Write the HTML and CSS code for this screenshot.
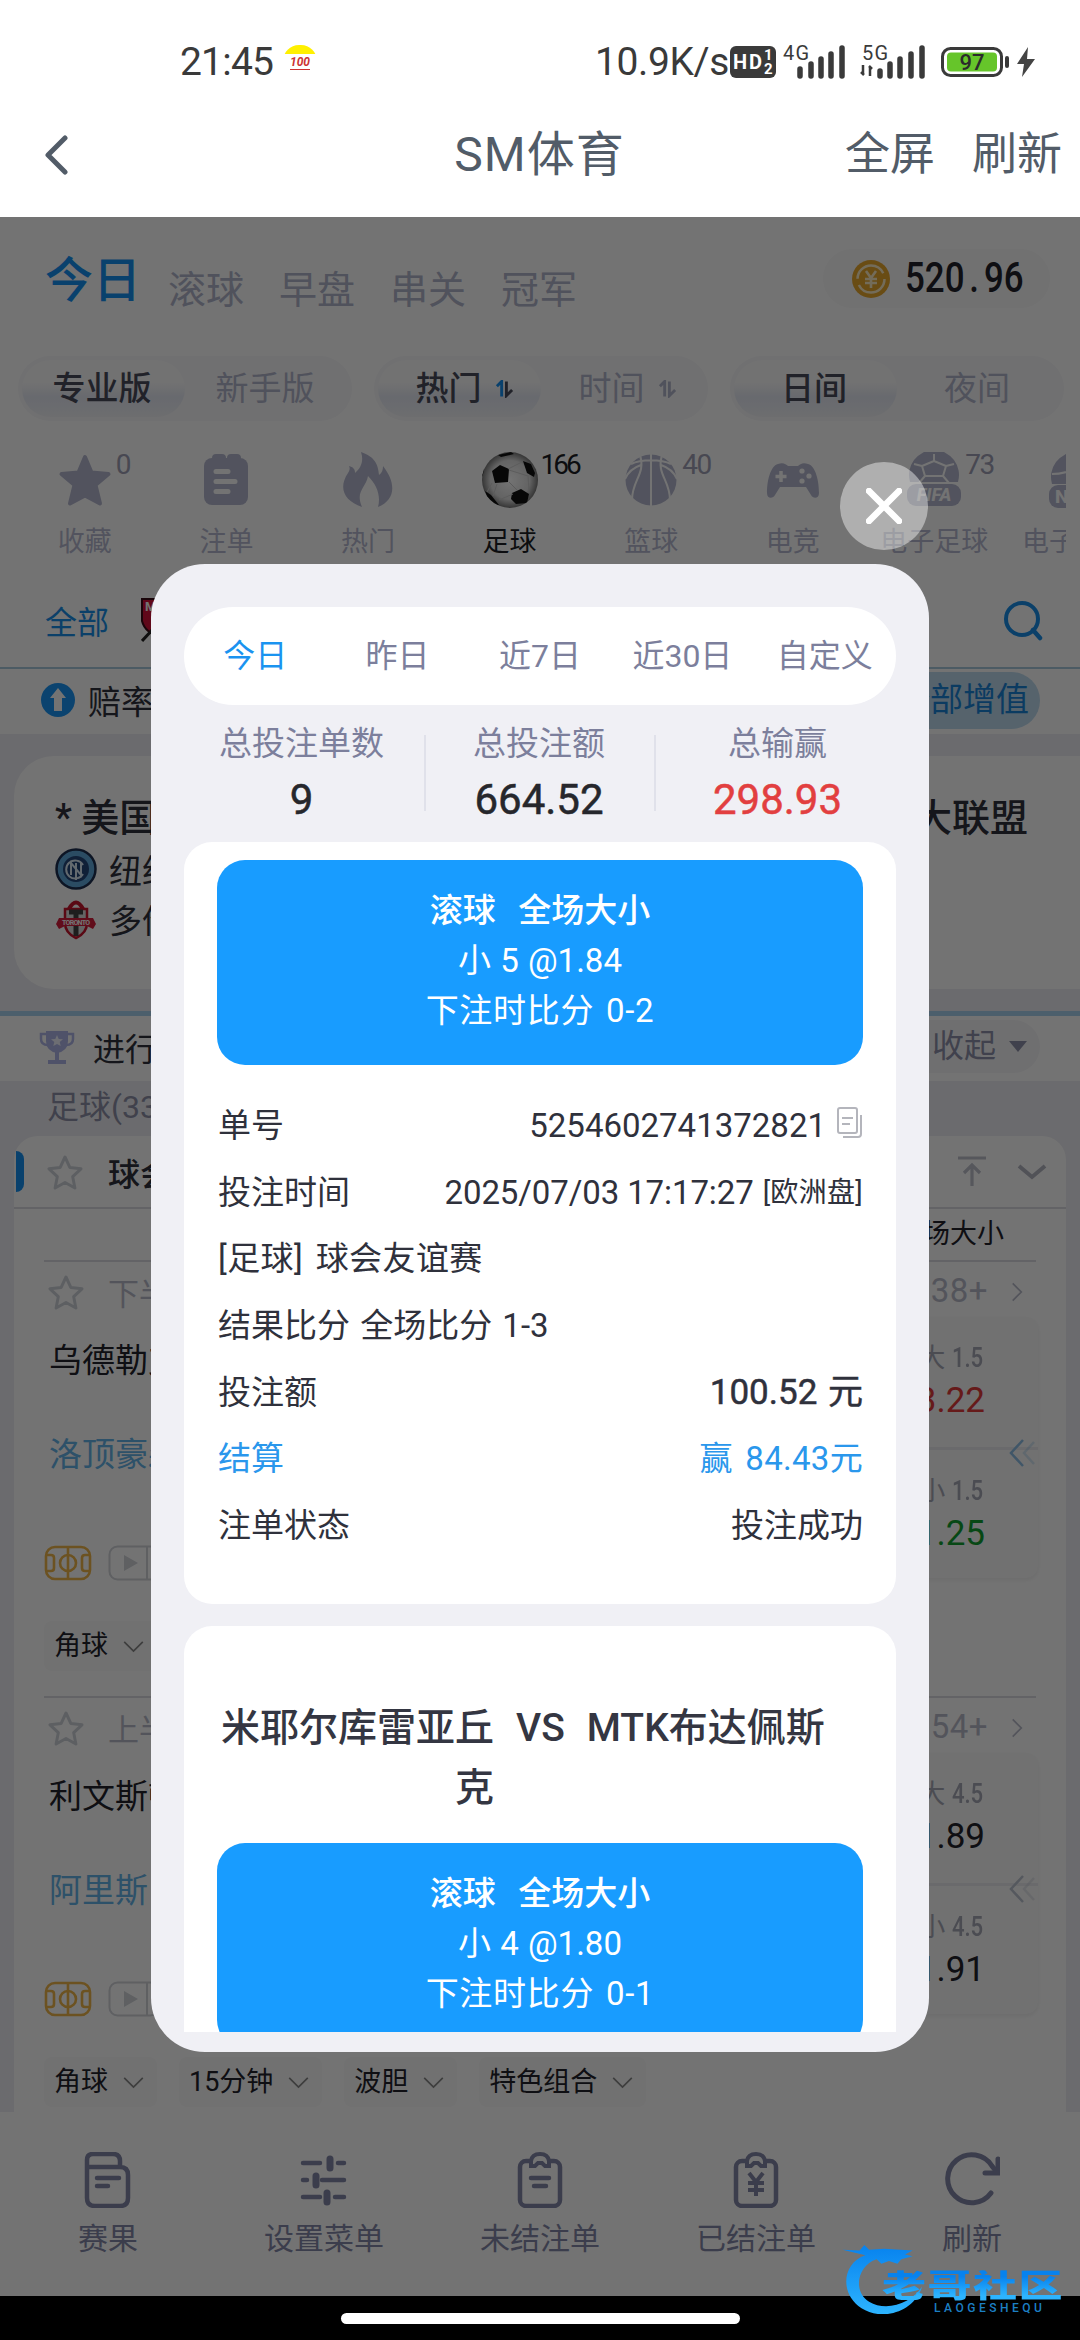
FILE: index.html
```html
<!DOCTYPE html>
<html lang="zh-CN">
<head>
<meta charset="utf-8">
<title>SM体育</title>
<link rel="stylesheet" href="styles.css">
</head>
<body>
<svg class="defs" width="0" height="0" aria-hidden="true">
  <symbol id="star" viewBox="0 0 40 36"><path d="M20 3l4.800 10.400 11.200 1.400-8.300 7.900 2.200 11.300L20 28.500 10.100 34l2.200-11.300L4 14.800l11.200-1.400z" fill="none" stroke="currentColor" stroke-width="3" stroke-linejoin="round"/></symbol>
  <symbol id="down" viewBox="0 0 22 14"><path d="M1 2l10 10L21 2" fill="none" stroke="currentColor" stroke-width="1.800"/></symbol>
  <symbol id="right" viewBox="0 0 14 22"><path d="M2 1l10 10L2 21" fill="none" stroke="currentColor" stroke-width="2"/></symbol>
  <symbol id="dbl" viewBox="0 0 28 30"><path d="M15 2L3 15l12 13" fill="none" stroke="currentColor" stroke-width="2.500"/><path d="M26 4L16 15l10 11" fill="none" stroke="currentColor" stroke-width="2.500" opacity=".35"/></symbol>
  <symbol id="pitch" viewBox="0 0 48 36"><g fill="none" stroke="currentColor" stroke-width="2.600"><rect x="2" y="2" width="44" height="32" rx="9"/><path d="M24 2v32M2 10h5q3 0 3 3v10q0 3-3 3H2M46 10h-5q-3 0-3 3v10q0 3 3 3h5"/><circle cx="24" cy="18" r="8"/></g></symbol>
  <symbol id="play" viewBox="0 0 52 36"><rect x="1.500" y="1.500" width="49" height="33" rx="8" fill="none" stroke="currentColor" stroke-width="2"/><path d="M16 10l14 8-14 8z" fill="currentColor"/><path d="M39 2v32" stroke="currentColor" stroke-width="2"/></symbol>
  <symbol id="sort" viewBox="0 0 20 18"><path d="M2 6l5-5v16" fill="none" stroke="var(--up)" stroke-width="3"/><path d="M12 1v15l6-6" fill="none" stroke="currentColor" stroke-width="3"/></symbol>
</svg>

<header class="status">
  <div class="status-left">
    <span class="clock">21:45</span>
    <span class="emoji"><b>100</b></span>
  </div>
  <div class="status-right">
    <span class="speed">10.9K/s</span>
    <svg class="hd" viewBox="0 0 46 32"><rect width="46" height="32" rx="6" fill="#3a3a3a"/><text x="3" y="23" font-size="20" font-weight="700" textLength="29" fill="#fff">HD</text><text x="34" y="14" font-size="15" font-weight="700" fill="#fff">1</text><text x="34" y="28" font-size="15" font-weight="700" fill="#fff">2</text></svg>
    <svg class="sig1" viewBox="0 0 66 34"><text x="0" y="15" font-size="20" textLength="26" fill="#3a3a3a">4G</text><path d="M17 31v-7M28 31v-12M38 31V14M48 31V9M59 31V3" stroke="#3a3a3a" stroke-width="5.500" stroke-linecap="round"/></svg>
    <svg class="sig2" viewBox="0 0 68 34"><text x="3" y="15" font-size="20" textLength="26" fill="#3a3a3a">5G</text><path d="M4 20v9M2 27l3 3M11 31v-9M13 24l-3-3" stroke="#3a3a3a" stroke-width="2.500"/><path d="M21 31v-5M31 31v-12M41 31V14M52 31V9M63 31V3" stroke="#3a3a3a" stroke-width="5.500" stroke-linecap="round"/></svg>
    <svg class="battery" viewBox="0 0 70 30"><rect x="1.500" y="1.500" width="59" height="27" rx="8" fill="#fff" stroke="#3a3a3a" stroke-width="3"/><rect x="6" y="5.500" width="50" height="19" rx="4" fill="#66c52a"/><path d="M66 11v8" stroke="#3a3a3a" stroke-width="4" stroke-linecap="round"/><text x="31" y="23" font-size="22" font-weight="500" text-anchor="middle" fill="#2b2b2b">97</text></svg>
    <svg class="bolt" viewBox="0 0 18 30"><path d="M11 0L0 17h7L5 30 18 12h-8z" fill="#444"/></svg>
  </div>
</header>
<div class="titlebar">
  <svg class="back" viewBox="0 0 24 40"><path d="M21 3L4 20l17 17" fill="none" stroke="#525c68" stroke-width="5" stroke-linecap="round" stroke-linejoin="round"/></svg>
  <h1>SM体育</h1>
  <nav><span>全屏</span><span>刷新</span></nav>
</div>

<main class="app">
  <section class="top">
    <div class="tabs"><b>今日</b><span>滚球</span><span>早盘</span><span>串关</span><span>冠军</span></div>
    <div class="balance">
      <svg viewBox="0 0 40 40"><circle cx="20" cy="20" r="19" fill="#e9a82e"/><circle cx="20" cy="20" r="13.500" fill="none" stroke="#fff0c8" stroke-width="2.500" stroke-dasharray="36 6.400"/><path d="M15 12l5 7 5-7M20 19v10M14 20h12M14 24h12" fill="none" stroke="#fff0c8" stroke-width="2.600"/></svg>
      <span class="money">520<i>.</i>96</span>
    </div>
  </section>
  <section class="segments">
    <div class="seg"><b>专业版</b><span>新手版</span></div>
    <div class="seg sorts"><b>热门<svg class="sort on"><use href="#sort"/></svg></b><span>时间<svg class="sort"><use href="#sort"/></svg></span></div>
    <div class="seg"><b>日间</b><span>夜间</span></div>
  </section>
  <section class="sports">
    <div class="sport"><div class="pic"><svg viewBox="0 0 56 56"><path d="M28 5l6.500 15.500 17 1.500-13 11 4.500 18.500-15-8-15 8L17.500 33l-13-11 17-1.500z" fill="currentColor" stroke="currentColor" stroke-width="4" stroke-linejoin="round"/></svg><sup>0</sup></div>收藏</div>
    <div class="sport"><div class="pic"><svg viewBox="0 0 56 56"><rect x="6" y="6" width="44" height="47" rx="8" fill="currentColor"/><path d="M18 6h6M33 6h6" stroke="currentColor" stroke-width="8" stroke-linecap="round"/><path d="M18 19.500h12M18 29.500h19M18 39.500h12" stroke="#fff" stroke-width="5" stroke-linecap="round"/></svg></div>注单</div>
    <div class="sport"><div class="pic"><svg viewBox="0 0 56 56"><path d="M21 0c14 5 17 12 18 23 3-2 4-5 4-9 14 18 12 34-5 41 3-11-1-22-10-31-2 12-13 15-6 31C4 49-2 36 8 21c2-3 2-5 1-7 4 1 6 3 6 7 6-5 9-12 6-21z" fill="currentColor"/></svg></div>热门</div>
    <div class="sport active"><div class="pic"><svg viewBox="0 0 56 56"><defs><radialGradient id="ball"><stop offset="0" stop-color="#fff"/><stop offset=".7" stop-color="#ddd"/><stop offset="1" stop-color="#777"/></radialGradient><clipPath id="bc"><circle cx="28" cy="28" r="28"/></clipPath></defs><circle cx="28" cy="28" r="28" fill="url(#ball)"/><g clip-path="url(#bc)" fill="#111"><path d="M10 19l8-6 9 4-1 13-13 1zM41 9l8 3 4 9-1 4-7-4zM30 41l9-4 8 5-2 9-11 1-5-5zM3 39l6 4 8 10H8zM16 3L29 0l3 2-13 3zM0 25l2-6v-5l-2 2z"/><path d="M27 30l8 8M26 17l14-7M27 18l19 6M46 23l1 18M10 31L5 40M15 32l-4 12M17 48l14-6" fill="none" stroke="#ccc"/></g></svg><sup>166</sup></div>足球</div>
    <div class="sport"><div class="pic"><svg viewBox="0 0 56 56"><circle cx="28" cy="28" r="25.500" fill="currentColor"/><path d="M28 2v52M17 3c6 19-8 25-8 45M39 3c-6 19 8 25 8 45M8 12c10-5 30-5 40 0M2 27c4-9 10-12 16-14M54 27c-4-9-10-12-16-14" fill="none" stroke="#fff" stroke-width="2"/></svg><sup>40</sup></div>篮球</div>
    <div class="sport"><div class="pic"><svg viewBox="0 0 56 56"><path d="M13 12c5-2 8 0 10 2h10c2-2 5-4 10-2 8 2 11 18 11 29 0 6-6 6-8 2l-5-8H15l-5 8c-2 4-8 4-8-2 0-11 3-27 11-29z" fill="currentColor"/><path d="M16 19v11M10.500 24.500h11" stroke="#fff" stroke-width="3.500"/><g fill="#fff"><circle cx="37" cy="19" r="2.600"/><circle cx="37" cy="29" r="2.600"/><circle cx="44" cy="24" r="2.600"/></g></svg></div>电竞</div>
    <div class="sport"><div class="pic"><svg viewBox="0 0 56 56"><path d="M4 30a25 25 0 1 1 48 0z" fill="currentColor"/><path d="M28 2v7M28 9l-12 5M28 9l12 5M16 14l-8-2M40 14l8-2M16 14l3 10h18l3-10M19 24l-6 7M37 24l6 7" fill="none" stroke="#fff" stroke-width="2"/><rect x="1" y="32" width="54" height="22" rx="9" fill="currentColor"/><text x="28" y="49" font-size="18" font-weight="800" font-style="italic" text-anchor="middle" fill="#fff">FIFA</text></svg><sup>73</sup></div>电子足球</div>
    <div class="sport"><div class="pic"><svg viewBox="0 0 56 56"><path d="M4 32a25 25 0 1 1 48 0z" fill="currentColor"/><path d="M4 22c10 0 18-2 30-8" fill="none" stroke="#fff" stroke-width="2"/><rect x="1" y="33" width="54" height="23" rx="9" fill="currentColor"/><text x="7" y="51" font-size="19" font-weight="800" fill="#fff">NBA</text></svg></div>电子篮球</div>
  </section>
  <section class="leagues">
    <span class="all">全部</span>
    <svg class="mls" viewBox="0 0 40 44"><path d="M1 1h38v22q-4 10-19 16Q4 35 1 23z" fill="#d4123a" stroke="#3a0c18" stroke-width="2"/><path d="M1 43l12-13" stroke="#222" stroke-width="3"/><text x="4" y="13" font-size="13" font-weight="700" fill="#fff">MLS</text></svg>
    <svg class="search" viewBox="0 0 40 42"><circle cx="19" cy="20" r="16" fill="none" stroke="#1a8fe8" stroke-width="4"/><path d="M30 31l7 8" stroke="#1a8fe8" stroke-width="4.500" stroke-linecap="round"/></svg>
  </section>
  <section class="boost">
    <svg viewBox="0 0 36 36"><circle cx="18" cy="18" r="17" fill="#1a96f5"/><path d="M18 6l8 10h-4v13h-8V16h-4z" fill="#fff"/></svg>
    <span>赔率</span><em>全部增值</em>
  </section>
  <section class="featured">
    <div class="f-card">
      <div class="f-head"><span>* 美国</span><span>大联盟</span></div>
      <div class="f-team"><svg viewBox="0 0 42 42"><circle cx="21" cy="21" r="19.500" fill="#5fa8dc" stroke="#1d2f50" stroke-width="2.500"/><circle cx="21" cy="21" r="13" fill="#24477a"/><path d="M16 27V15l10 12V15M28 17a9 9 0 1 0 0 9M21 15v17" fill="none" stroke="#dcecf7" stroke-width="2"/></svg>纽约</div>
      <div class="f-team"><svg viewBox="0 0 42 42"><path d="M10 11h22v14q0 10-11 15Q10 35 10 25z" fill="#ddd" stroke="#c8142d" stroke-width="2.500"/><path d="M14 11q7-13 14 0" fill="none" stroke="#c8142d" stroke-width="4"/><path d="M21 13v25M14 14h14" stroke="#444" stroke-width="5"/><path d="M4 20h34l3 6-3 5-6-3H10l-6 3-3-5z" fill="#d81e3c"/><text x="21" y="27" font-size="7" font-weight="700" textLength="28" text-anchor="middle" fill="#fff">TORONTO</text></svg>多伦多</div>
    </div>
  </section>
  <section class="live">
    <svg class="cup" viewBox="0 0 36 36"><path d="M7 2h22v10q0 10-11 12Q7 22 7 12z" fill="#b0b7e8"/><path d="M7 5H2v5q0 6 7 6M29 5h5v5q0 6-7 6" fill="none" stroke="#b0b7e8" stroke-width="2.500"/><path d="M18 23v8M9 33h18" stroke="#b0b7e8" stroke-width="4"/><path d="M18 6l1.700 4 4.300.300-3.300 2.700 1 4L18 15l-3.700 2 1-4-3.300-2.700 4.300-.300z" fill="#f2f4ff"/></svg>
    <span>进行中</span><em>收起<i></i></em>
  </section>
  <div class="count">足球(33)</div>
  <section class="list">
    <div class="l-head">
      <i class="tab"></i><svg class="ic-star"><use href="#star"/></svg><span>球会友谊赛</span>
      <svg class="totop" viewBox="0 0 30 32"><path d="M1 2h28M15 30V10M7 17l8-8 8 8" fill="none" stroke="#bfc1cc" stroke-width="3.200"/></svg>
      <svg class="fold" viewBox="0 0 30 18"><path d="M2 3l13 11L28 3" fill="none" stroke="#b4b6c2" stroke-width="4"/></svg>
    </div>
    <div class="l-cols">全场大小</div>
    <article class="match">
      <div class="m-top"><svg class="ic-star"><use href="#star"/></svg><span>下半场</span><em>38+</em><svg class="ic-right"><use href="#right"/></svg></div>
      <div class="m-body">
        <div class="teams"><b>乌德勒支</b><span>洛顶豪森</span><p><svg class="ic-pitch"><use href="#pitch"/></svg><svg class="ic-play"><use href="#play"/></svg></p></div>
        <div class="odds"><div><small>大 <i>1.5</i></small><strong class="red">3.22</strong></div><div><small>小 <i>1.5</i></small><strong class="green">1.25</strong></div><svg class="ic-dbl blue"><use href="#dbl"/></svg></div>
      </div>
      <div class="chips"><span>角球<svg><use href="#down"/></svg></span></div>
    </article>
    <article class="match">
      <div class="m-top"><svg class="ic-star"><use href="#star"/></svg><span>上半场</span><em>54+</em><svg class="ic-right"><use href="#right"/></svg></div>
      <div class="m-body">
        <div class="teams"><b>利文斯顿</b><span>阿里斯</span><p><svg class="ic-pitch"><use href="#pitch"/></svg><svg class="ic-play"><use href="#play"/></svg></p></div>
        <div class="odds"><div><small>大 <i>4.5</i></small><strong>1.89</strong></div><div><small>小 <i>4.5</i></small><strong>1.91</strong></div><svg class="ic-dbl"><use href="#dbl"/></svg></div>
      </div>
      <div class="chips"><span>角球<svg><use href="#down"/></svg></span><span>15分钟<svg><use href="#down"/></svg></span><span>波胆<svg><use href="#down"/></svg></span><span>特色组合<svg><use href="#down"/></svg></span></div>
    </article>
  </section>
  <nav class="bottom">
    <div><svg viewBox="0 0 56 56"><path d="M7 17V8q0-6 6-6h20q7 0 7 7v6M7 14v32q0 8 8 8h25q8 0 8-8V23q0-8-8-8H7" fill="none" stroke="currentColor" stroke-width="4.500"/><path d="M17 26h22M17 34h11" stroke="currentColor" stroke-width="4.500" stroke-linecap="round"/></svg>赛果</div>
    <div><svg viewBox="0 0 56 56"><path d="M7 11h17M42 11h6M7 28h4M26 28h22M7 45h17M39 45h9" stroke="currentColor" stroke-width="4.500" stroke-linecap="round"/><path d="M34 7v9M20 24v9M31 41v9" stroke="currentColor" stroke-width="7" stroke-linecap="round"/></svg>设置菜单</div>
    <div><svg viewBox="0 0 56 56"><rect x="8" y="9" width="40" height="45" rx="6" fill="none" stroke="currentColor" stroke-width="4.500"/><path d="M19 14V9q1-7 9-7t9 7v5h-4l-3-3h-4l-3 3z" fill="#fff" stroke="currentColor" stroke-width="4"/><path d="M19 26h18M22 34h12" stroke="currentColor" stroke-width="4.500" stroke-linecap="round"/></svg>未结注单</div>
    <div><svg viewBox="0 0 56 56"><rect x="8" y="9" width="40" height="45" rx="6" fill="none" stroke="currentColor" stroke-width="4.500"/><path d="M19 14V9q1-7 9-7t9 7v5h-4l-3-3h-4l-3 3z" fill="#fff" stroke="currentColor" stroke-width="4"/><path d="M21 21l7 9 7-9M28 30v14M20 31h16M20 38h16" fill="none" stroke="currentColor" stroke-width="4"/></svg>已结注单</div>
    <div><svg viewBox="0 0 56 56"><path d="M47 41A24 24 0 1 1 48 14l4 5" fill="none" stroke="currentColor" stroke-width="5" stroke-linecap="round"/><path d="M54 7v14H41" fill="none" stroke="currentColor" stroke-width="5" stroke-linecap="round"/></svg>刷新</div>
  </nav>
</main>
<footer class="gesture"><i></i></footer>

<div class="mask"></div>
<button class="close" aria-label="关闭"><svg viewBox="0 0 36 36"><path d="M3 3l30 30M33 3L3 33" stroke="#fff" stroke-width="6.500" stroke-linecap="round"/></svg></button>
<section class="modal">
  <div class="range"><b>今日</b><span>昨日</span><span>近7日</span><span>近30日</span><span>自定义</span></div>
  <div class="totals">
    <div>总投注单数<b>9</b></div>
    <div>总投注额<b>664.52</b></div>
    <div>总输赢<b class="lose">298.93</b></div>
  </div>
  <div class="bets">
    <article class="bet">
      <div class="pick"><b>滚球&nbsp; 全场大小</b><span>小 5 @1.84</span><span class="score">下注时比分 0-2</span></div>
      <dl>
        <div><dt>单号</dt><dd class="num">5254602741372821<svg viewBox="0 0 26 32"><g fill="none" stroke="#b4b5bc" stroke-width="2"><rect x="1" y="1" width="19" height="25" rx="2"/><path d="M24 8v19q0 3-3 3H6M5 11h11M5 17h8"/></g></svg></dd></div>
        <div><dt>投注时间</dt><dd class="time">2025/07/03 17:17:27 <small>[欧洲盘]</small></dd></div>
        <div><dt class="league">[足球] 球会友谊赛</dt></div>
        <div><dt>结果比分 全场比分 1-3</dt></div>
        <div><dt>投注额</dt><dd class="amount">100.52 元</dd></div>
        <div class="settle"><dt>结算</dt><dd>赢 84.43元</dd></div>
        <div><dt>注单状态</dt><dd>投注成功</dd></div>
      </dl>
    </article>
    <article class="bet second">
      <h2><span>米耶尔库雷亚丘</span><span>VS</span><span>MTK布达佩斯</span></h2>
      <h2 class="rest">克</h2>
      <div class="pick"><b>滚球&nbsp; 全场大小</b><span>小 4 @1.80</span><span class="score">下注时比分 0-1</span></div>
    </article>
  </div>
</section>
<div class="watermark">
  <svg viewBox="0 0 96 74"><defs><linearGradient id="wm" x1="0" y1="0" x2="0" y2="1"><stop offset="0" stop-color="#0782ee"/><stop offset="1" stop-color="#2db4ff"/></linearGradient></defs><path d="M36 16C16 22 10 50 28 61c18 11 45 2 56-16-8 27-42 37-64 23C-4 52 0 20 24 12L0 6l18 1 5-6 5 5 16-1 30 2-8 4 8 2-12 3-4 5-9-3-8 3z" fill="url(#wm)"/></svg>
  <div><b>老哥社区</b><span>LAOGESHEQU</span></div>
</div>
</body>
</html>
```
FILE: styles.css
```css
* { box-sizing: border-box; margin: 0; padding: 0; }
body { position: relative; width: 1080px; height: 2340px; overflow: hidden; background: #fff; font-family: Roboto, "Noto Sans CJK SC", sans-serif; font-size: 32px; color: #2f313c; }
svg { display: block; flex: none; }
i, em { font-style: normal; }
.defs { position: absolute; }
svg text { font-family: Roboto, sans-serif; }

/* system status bar */
.status { height: 124px; display: flex; justify-content: space-between; color: #3a3a3a; font-size: 38px; line-height: 124px; }
.status svg { overflow: visible; }
.status-left { display: flex; padding-left: 180px; gap: 10px; }
.clock { width: 93px; font-size: 39px; white-space: nowrap; letter-spacing: -.8px; }
.emoji { width: 34px; height: 42px; margin-top: 45px; border-radius: 16px 16px 0 0; background: linear-gradient(#fff000 0 9px, #fff 9px); line-height: 34px; text-align: center; color: #c33; font-size: 12px; font-style: italic; }
.emoji b { border-bottom: 1px solid #c33; }
.status-right { display: flex; align-items: center; padding-right: 45px; }
.speed { width: 135px; font-size: 39px; white-space: nowrap; letter-spacing: -.4px; }
.hd { width: 46px; height: 32px; }
.sig1 { width: 66px; height: 34px; margin-left: 7px; }
.sig2 { width: 68px; height: 34px; margin-left: 10px; }
.battery { width: 70px; height: 30px; margin-left: 14px; }
.bolt { width: 18px; height: 30px; margin-left: 6px; }

/* browser title bar */
.titlebar { height: 93px; padding: 0 18px 32px 44px; display: grid; grid-template-columns: 1fr auto 1fr; align-items: center; color: #525c68; }
.titlebar h1 { font-size: 48px; font-weight: 400; line-height: 60px; margin-left: -27px; letter-spacing: 1px; }
.titlebar nav { display: flex; justify-content: flex-end; gap: 37px; font-size: 45px; line-height: 60px; }
.back { width: 24px; height: 40px; }

/* page */
.app { height: 2079px; background: #fff; overflow: hidden; }
.top { height: 124px; display: flex; justify-content: space-between; padding: 32px 30px 0 45px; color: #b2b5cc; }
.tabs { display: flex; gap: 35px; font-size: 38px; line-height: 82px; }
.tabs b { font-size: 48px; font-weight: 500; line-height: 64px; color: #1690f2; margin-right: -8px; }
.balance { width: 227px; height: 59px; border-radius: 30px; background: #fafafa; display: flex; align-items: center; padding-left: 28px; gap: 14px; }
.balance svg { width: 40px; height: 40px; }
.money { font-size: 42px; font-weight: 500; color: #22232b; transform: scaleX(.83) translateY(-1px); transform-origin: left; white-space: nowrap; }
.money i { display: inline-block; width: .56em; text-align: center; }
.segments { display: flex; justify-content: space-between; padding: 15px 16px 0 18px; height: 96px; }
.seg { width: 334px; height: 65px; border-radius: 33px; background: #f8f8fa; display: flex; padding: 4px; font-size: 33px; line-height: 57px; color: #b2b5cc; }
.seg > * { flex: 1; display: flex; justify-content: center; align-items: center; gap: 13px; font-weight: 400; padding-right: 3px; }
.seg b { border-radius: 30px; color: #4a4c5c; font-weight: 500; background: linear-gradient(#fcfcfd 40%, #e6eaf4 65%, #f2f3f7); }
.sorts > * { padding: 0 0 0 10px; }
.sort { width: 19px; height: 18px; --up: currentColor; }
.sort.on { --up: #1690f2; }
.sports { width: 1066px; height: 140px; overflow: hidden; display: flex; padding: 15px 0 0 14px; color: #b6b9d0; font-size: 27px; }
.sport { width: 141.600px; flex: none; text-align: center; line-height: 36px; white-space: nowrap; }
.pic { position: relative; width: 56px; height: 56px; margin: 0 auto 16px; }
.pic svg { width: 56px; height: 56px; }
.pic sup { position: absolute; left: 59px; top: -2px; font-size: 28px; line-height: 30px; letter-spacing: -1.500px; color: #9fa1b5; font-weight: 400; }
.active, .active .pic sup { color: #1c1d24; }
.active .pic sup { letter-spacing: -3px; }
.leagues { height: 92px; border-bottom: 2px solid #a9c9de; display: flex; align-items: center; padding: 0 37px 4px 45px; }
.all { color: #1a8fe8; flex: none; margin-right: 32px; }
.mls { width: 40px; height: 44px; }
.search { width: 40px; height: 42px; margin-left: auto; }
.boost { height: 65px; display: flex; align-items: center; padding: 0 40px 3px; color: #2f313c; font-size: 33px; }
.boost > svg { width: 36px; height: 36px; margin-right: 12px; }
.boost em { margin-left: auto; height: 57px; line-height: 55px; border-radius: 29px; padding: 0 11px 0 30px; background: #bfdcf0; color: #1a84d8; }
.featured { height: 277px; background: #eeeef3; padding: 22px 0 22px 14px; }
.f-card { height: 233px; background: #fff; border-radius: 40px 0 0 40px; padding: 36px 52px 0 41px; font-size: 33px; color: #2f313c; }
.f-head { display: flex; justify-content: space-between; font-size: 38px; line-height: 52px; font-weight: 500; }
.f-team { display: flex; align-items: center; gap: 12px; height: 50px; }
.f-team svg { width: 42px; height: 42px; }
.live { height: 70px; border-top: 5px solid #a9d3f0; display: flex; align-items: center; padding: 0 40px 4px 39px; font-size: 32px; color: #2f313c; }
.cup { width: 36px; height: 36px; margin-right: 18px; }
.live em { margin-left: auto; height: 53px; line-height: 51px; padding: 0 13px 0 30px; border-radius: 27px; background: #f7f7f9; color: #8e91aa; display: flex; align-items: center; gap: 13px; }
.live em i { border: 9px solid transparent; border-top: 11px solid #8e91aa; border-bottom: 0; }
.count { height: 55px; line-height: 52px; padding-left: 47px; background: #eeeef3; color: #8e91a8; }
.list { height: 976px; background: linear-gradient(#eeeef3 40px, #fff 40px) padding-box; border: solid #eeeef3; border-width: 0 14px; }
.l-head { height: 73px; border-radius: 24px 24px 0 0; border-bottom: 2px solid #dcdce2; display: flex; align-items: center; padding: 0 19px 0 2px; font-weight: 500; background: #fff; }
.tab { width: 8px; height: 41px; border-radius: 0 12px 12px 0; background: #1690f2; }
.ic-star { width: 42px; height: 36px; color: #cfd3da; margin-left: 20px; }
.l-head span { margin-left: 22px; }
.totop { width: 30px; height: 32px; margin-left: auto; }
.fold { width: 30px; height: 18px; margin-left: 30px; }
.l-cols { height: 51px; line-height: 51px; padding-right: 62px; text-align: right; font-size: 27px; color: #22232b; }
.match { height: 436px; margin: 0 30px; border-top: 2px solid #dcdce2; }
.m-top { height: 60px; display: flex; align-items: center; font-size: 31px; color: #b8bbca; padding-bottom: 1px; }
.m-top .ic-star { margin-left: 1px; margin-right: 21px; }
.m-top em { margin-left: auto; font-size: 33px; letter-spacing: .5px; margin-top: -2px; }
.ic-right { width: 12px; height: 20px; margin: 0 13px 0 23px; }
.m-body { display: flex; justify-content: space-between; height: 296px; }
.teams { padding-left: 5px; font-size: 33px; line-height: 48px; white-space: nowrap; }
.teams b, .teams span { display: block; font-weight: 400; color: #22232b; padding-top: 15px; height: 94px; }
.teams span { color: #65b3e8; }
.teams p { display: flex; gap: 16px; margin: 35px 0 0 -5px; }
.ic-pitch { width: 48px; height: 36px; color: #f0b64a; }
.ic-play { width: 52px; height: 36px; color: #d2d4da; }
.odds { position: relative; width: 150px; height: 261px; margin: -5px -2px 0 0; border-radius: 12px; background: #fafafa; text-align: right; box-shadow: 0 2px 4px #0001; }
.odds div { height: 130px; padding: 21px 55px 0 0; display: flex; flex-direction: column; }
.odds div + div { border-top: 3px solid #ececf0; }
.odds small { font-size: 26px; line-height: 40px; color: #a6a8b6; }
.odds i { display: inline-block; transform: scaleX(.82); transform-origin: right; margin-left: -7px; font-size: 27px; font-weight: 500; }
.odds strong { font-size: 35px; line-height: 46px; font-weight: 400; color: #22232b; margin-right: -2px; }
.odds .red { color: #e23b3b; }
.odds .green { color: #10a030; }
.ic-dbl { position: absolute; right: 2px; top: 121px; width: 28px; height: 30px; color: #bcc4d0; }
.ic-dbl.blue { color: #8fbfe6; }
.chips { display: flex; gap: 22px; padding-top: 3px; }
.chips span { height: 50px; line-height: 48px; padding: 0 13px 0 10px; border-radius: 8px; background: #fafafa; display: flex; align-items: center; gap: 15px; font-size: 27px; color: #22232b; white-space: nowrap; }
.chips svg { width: 21px; height: 13px; color: #888; }
.bottom { height: 184px; display: grid; grid-template-columns: repeat(5, 1fr); background: #fff; padding-top: 40px; color: #8488a8; font-size: 30px; line-height: 42px; }
.bottom div { display: flex; flex-direction: column; align-items: center; gap: 10px; }
.bottom svg { width: 56px; height: 56px; }
.gesture { height: 44px; background: #000; display: flex; align-items: center; justify-content: center; }
.gesture i { width: 399px; height: 11px; border-radius: 6px; background: #fff; }

/* dialog */
.mask { position: absolute; left: 0; right: 0; top: 217px; height: 2079px; background: rgba(0, 0, 0, .55); }
.close { position: absolute; left: 840px; top: 462px; width: 88px; height: 88px; border: 0; border-radius: 50%; background: rgba(255, 255, 255, .43); display: grid; place-items: center; }
.close svg { width: 36px; height: 36px; }
.modal { position: absolute; left: 151px; top: 564px; width: 778px; height: 1488px; border-radius: 54px; background: #f0f0f5; padding: 43px 33px 20px 33px; display: flex; flex-direction: column; }
.range { height: 98px; border-radius: 49px; background: #fff; display: grid; grid-template-columns: repeat(5, 1fr); text-align: center; line-height: 98px; color: #7c7f9c; flex: none; }
.range b { font-weight: 400; color: #1a93f0; }
.totals { height: 137px; flex: none; display: grid; grid-template-columns: 240px 230px 1fr; text-align: center; color: #7c7f9c; font-size: 33px; line-height: 44px; padding-top: 17px; }
.totals div { height: 94px; }
.totals div:first-child { padding-right: 5px; }
.totals div:last-child { padding-left: 5px; }
.totals div + div { background: linear-gradient(#e0e1ea, #e0e1ea) left 13px / 2px 76px no-repeat; }
.totals b { display: block; font-size: 42px; font-weight: 400; -webkit-text-stroke: .5px; line-height: 68px; color: #26272c; }
.totals .lose { color: #e23f40; }
.bets { flex: 1; overflow: hidden; display: flex; flex-direction: column; gap: 22px; }
.bet { flex: none; height: 762px; border-radius: 28px; background: #fff; padding: 18px 33px 0; }
.pick { height: 205px; border-radius: 28px; background: #189cff; color: #fff; text-align: center; font-size: 33px; line-height: 50px; padding-top: 26px; }
.pick b, .pick span { display: block; font-weight: 500; word-spacing: 3px; }
.pick span { font-weight: 400; word-spacing: 1px; }
.pick .score { letter-spacing: .7px; word-spacing: 3px; }
dl { padding: 28px 0 0 1px; font-size: 33px; line-height: 64px; word-spacing: 2px; }
dl > div { display: flex; justify-content: space-between; height: 66.600px; align-items: center; white-space: nowrap; }
dd { display: flex; align-items: center; }
.league { word-spacing: 4px; letter-spacing: .4px; }
.num svg { width: 26px; height: 32px; margin: -6px 0 0 11px; }
.time { letter-spacing: -.1px; word-spacing: 0; }
.time small { font-size: 28px; margin-left: 9px; letter-spacing: .3px; }
.amount { font-size: 35px; -webkit-text-stroke: .5px; }
.settle { color: #2a97ec; }
.settle dd { word-spacing: 4px; letter-spacing: .3px; }
.second { padding-top: 72px; }
.second h2 { display: flex; gap: 24px; padding-left: 4px; font-size: 39px; font-weight: 500; line-height: 60px; white-space: nowrap; color: #343642; }
.second h2 span + span { font-weight: 500; margin-left: -2px; }
.second .rest { padding-left: 238px; margin-bottom: 25px; }
.watermark { position: absolute; left: 842px; top: 2244px; width: 222px; height: 72px; }
.watermark svg { width: 92px; height: 70px; }
.watermark div { position: absolute; left: 40px; top: 14px; width: 190px; }
.watermark b { display: block; font-size: 44px; line-height: 44px; letter-spacing: 1.500px; font-weight: 900; white-space: nowrap; background: linear-gradient(#0782ee 20%, #2db4ff 80%); -webkit-background-clip: text; background-clip: text; color: transparent; transform: scaleY(.72); transform-origin: bottom; }
.watermark span { display: block; padding-left: 52px; font-size: 12px; line-height: 13px; font-weight: 500; letter-spacing: 3.500px; color: #1c7fc4; }
```
